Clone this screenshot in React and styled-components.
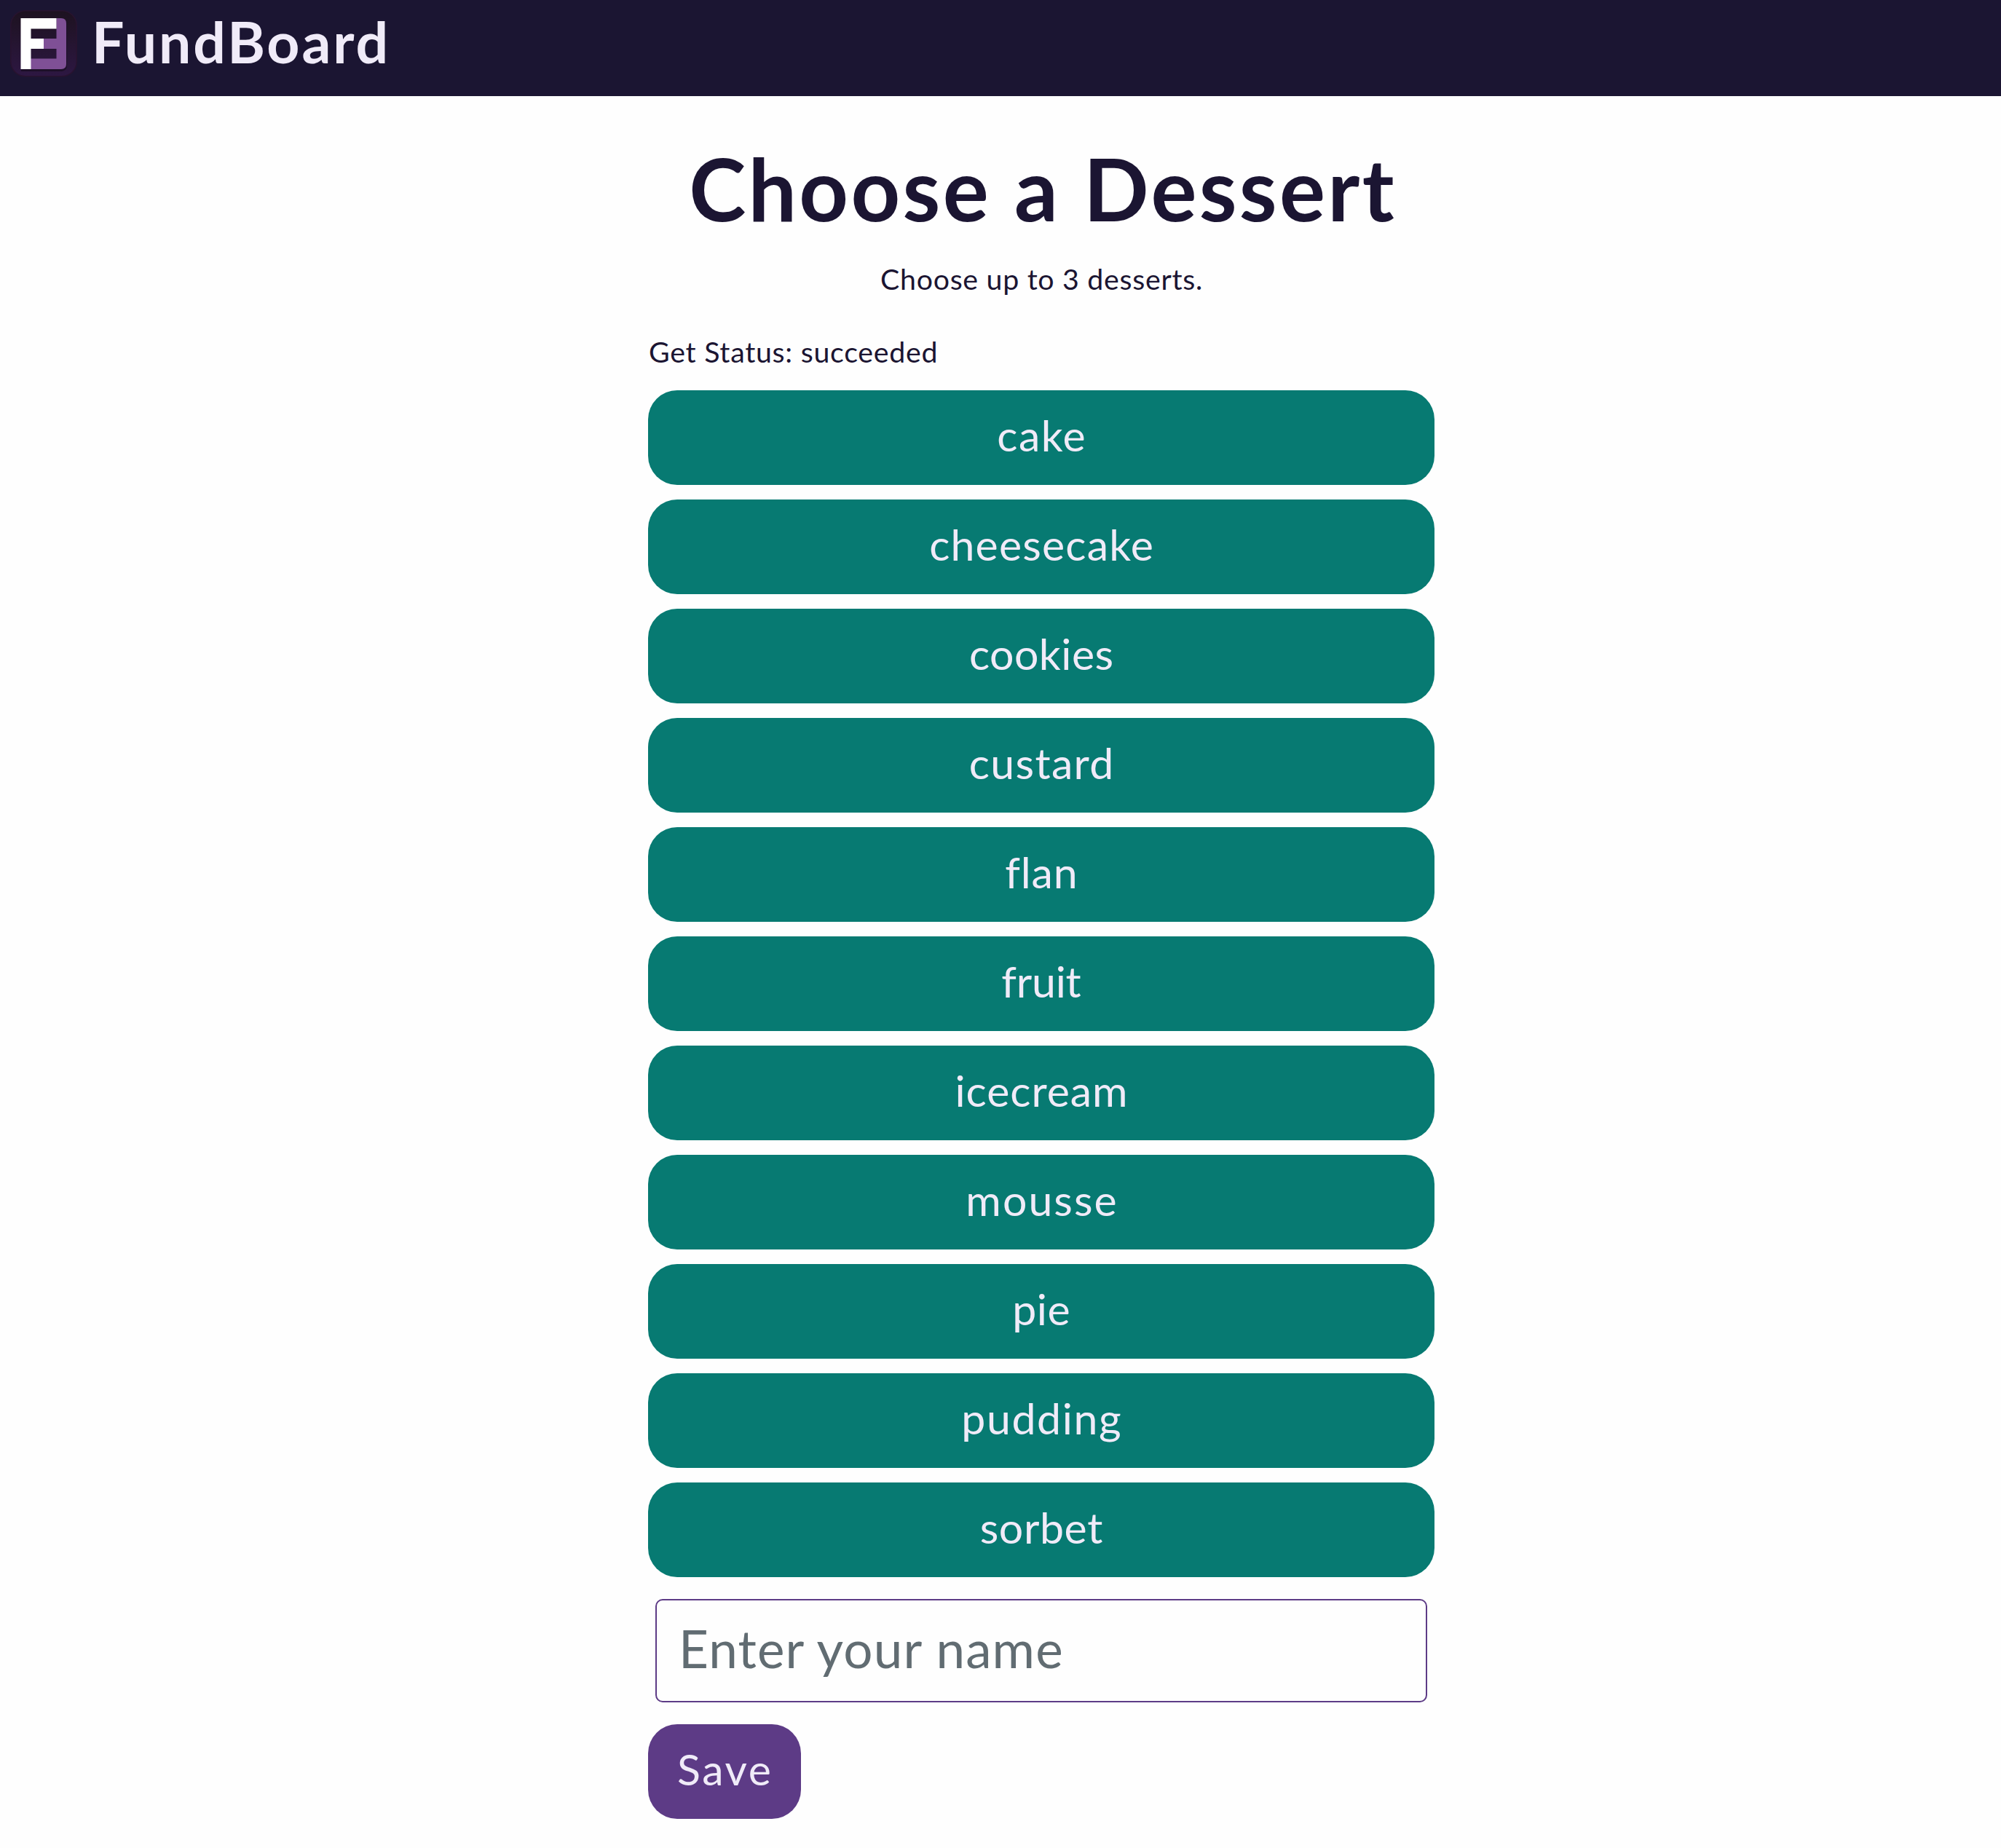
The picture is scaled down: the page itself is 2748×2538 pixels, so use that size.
import React from 'react';
import styled, { createGlobalStyle } from 'styled-components';

const GlobalStyle = createGlobalStyle`
  *, *::before, *::after { box-sizing: border-box; }
  body {
    margin: 0;
    background: #fefefe;
    color: #1b1532;
    font-family: Lato, "Open Sans", sans-serif;
    font-size: 39.3px;
    font-variant-ligatures: none;
  }
`;

const Header = styled.header`
  display: flex;
  align-items: flex-start;
  gap: 20px;
  height: 132px;
  padding-left: 14px;
  background: #1b1532;
`;

const Logo = styled.svg`
  flex: none;
  width: 92px;
  height: 92px;
  margin-top: 14px;
`;

const Brand = styled.span`
  color: #f0ebf8;
  font-size: 78.7px;
  font-weight: 700;
  line-height: 114px;
  letter-spacing: 2.9px;
`;

const Main = styled.main`
  display: flex;
  flex-direction: column;
  width: 1080px;
  margin-left: 890px;
  padding: 55px 0 40px;
`;

const Title = styled.h1`
  margin: 0;
  font-size: 118px;
  font-weight: 700;
  line-height: 144px;
  letter-spacing: 3.3px;
  text-align: center;
  text-indent: 4px;
  white-space: nowrap;
`;

const Hint = styled.p`
  margin: 22px 0 40px;
  line-height: 60px;
  letter-spacing: 0.7px;
  text-align: center;
  text-indent: 1px;
`;

const Status = styled.p`
  margin: 0 0 23px;
  padding-left: 1px;
  line-height: 60px;
  letter-spacing: 0.73px;
`;

const DessertList = styled.div`
  display: flex;
  flex-direction: column;
  gap: 20px;
`;

const Button = styled.button`
  height: 130px;
  padding: 0 40px 7px;
  border: 0;
  border-radius: 40px;
  background: #077a72;
  color: #f0ebf8;
  font: 400 59px Lato, "Open Sans", sans-serif;
  letter-spacing: ${({ $tracking }) => $tracking}px;
  text-indent: ${({ $tracking }) => $tracking}px;
`;

const SaveButton = styled(Button)`
  align-self: flex-start;
  width: 210px;
  background: #5d3b86;
  text-indent: 0;
`;

const NameInput = styled.input`
  height: 142px;
  margin: 30px 10px;
  padding: 0 30px 7px;
  border: 2px solid #5d3b86;
  border-radius: 10px;
  background: transparent;
  color: #1b1532;
  font: 400 71px Lato, "Open Sans", sans-serif;
  letter-spacing: 1.16px;

  &::placeholder {
    color: #616c72;
    opacity: 1;
  }
`;

const DESSERTS = [
  { name: 'cake', tracking: 1.5 },
  { name: 'cheesecake', tracking: 1.18 },
  { name: 'cookies', tracking: 0.46 },
  { name: 'custard', tracking: 1.36 },
  { name: 'flan', tracking: 0.89 },
  { name: 'fruit', tracking: -0.23 },
  { name: 'icecream', tracking: 0.96 },
  { name: 'mousse', tracking: 2.05 },
  { name: 'pie', tracking: 0.48 },
  { name: 'pudding', tracking: 1.6 },
  { name: 'sorbet', tracking: 0.6 },
];

function FundBoardLogo() {
  return (
    <Logo viewBox="0 0 92 92" aria-hidden="true">
      <defs>
        <linearGradient id="tile" x1="0" y1="0" x2="0" y2="1">
          <stop offset="0" stopColor="#1d1220" />
          <stop offset="1" stopColor="#2d1742" />
        </linearGradient>
      </defs>
      <rect x="0.75" y="0.75" width="90.5" height="90" rx="20" fill="url(#tile)" stroke="#28132f" strokeWidth="1.5" />
      <path d="M15 81V84H71Q78 83 78 75V16Q78 14 77 13V74L70 81Z" fill="#1d1029" />
      <path d="M63.5 11H70Q77 11 77 18V74Q77 81 70 81H28V66.5H63.5V53H45V39H63.5Z" fill="#7f5096" />
      <path d="M14.5 11H63.5V25.5H28.5V39H46V53H28.5V81H14.5Z" fill="#ffffff" />
    </Logo>
  );
}

export default function App() {
  return (
    <>
      <GlobalStyle />
      <Header>
        <FundBoardLogo />
        <Brand>FundBoard</Brand>
      </Header>
      <Main>
        <Title>Choose a Dessert</Title>
        <Hint>Choose up to 3 desserts.</Hint>
        <Status>Get Status: succeeded</Status>
        <DessertList>
          {DESSERTS.map(({ name, tracking }) => (
            <Button key={name} type="button" $tracking={tracking}>{name}</Button>
          ))}
        </DessertList>
        <NameInput type="text" placeholder="Enter your name" />
        <SaveButton type="button" $tracking={2.63}>Save</SaveButton>
      </Main>
    </>
  );
}
